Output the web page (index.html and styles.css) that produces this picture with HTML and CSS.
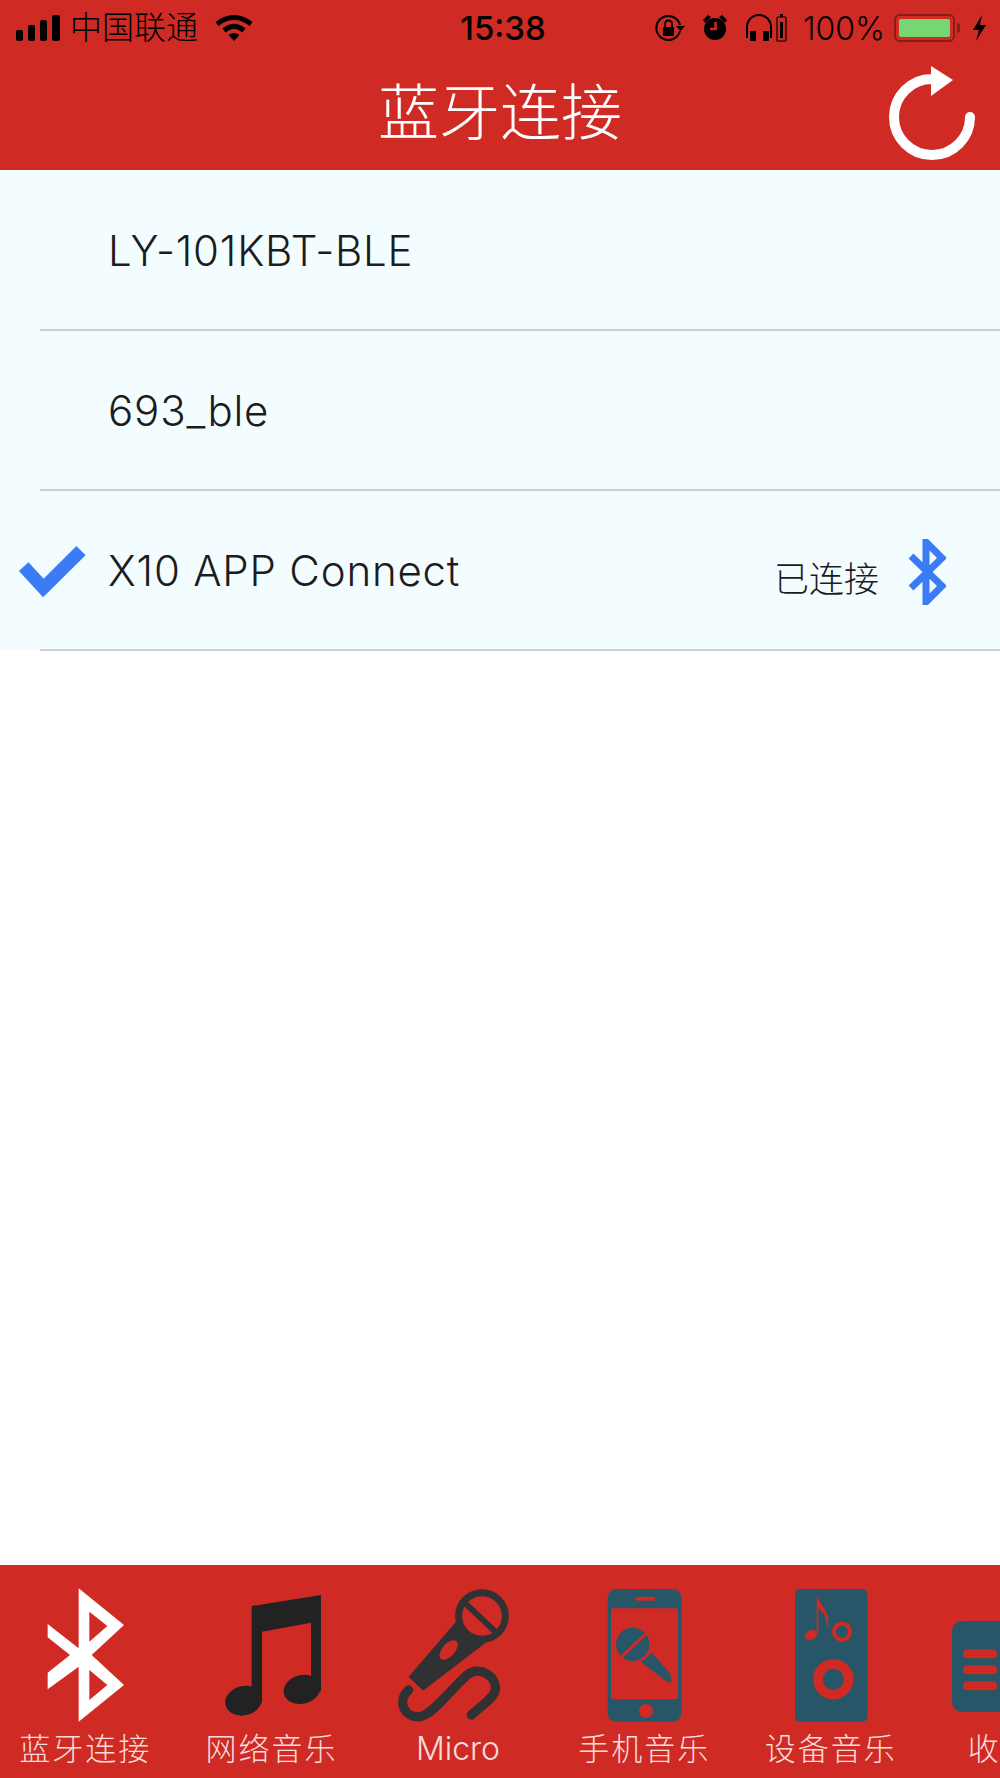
FILE: index.html
```html
<!DOCTYPE html>
<html lang="zh-CN">
<head>
    <meta charset="UTF-8">
    <meta name="viewport" content="width=device-width, initial-scale=1.0">
    <title>蓝牙连接</title>
    <link rel="stylesheet" href="styles.css">
</head>
<body>

    <div class="page">

        <div class="header">
            <div class="status-bar">
                <div class="status-left">
                    <svg class="signal" width="44" height="26" viewBox="0 0 44 26">
                        <rect x="0" y="15" width="7" height="11" rx="2"/>
                        <rect x="12" y="10" width="7" height="16" rx="2"/>
                        <rect x="24" y="5" width="7" height="21" rx="2"/>
                        <rect x="36" y="0" width="8" height="26" rx="2"/>
                    </svg>
                    <span class="carrier">中国联通</span>
                    <svg class="wifi" width="38" height="26" viewBox="0 0 38 26">
                        <path class="wifi-arc" d="M2 9 Q19 -4 36 9"/>
                        <path class="wifi-arc" d="M9 15.5 Q19 7 29 15.5"/>
                        <path d="M13.5 20 Q19 16 24.5 20 L19 26 Z"/>
                    </svg>
                </div>
                <div class="time">15:38</div>
                <div class="status-right">
                    <svg width="30" height="28" viewBox="0 0 30 28">
                        <path class="line-icon" d="M25 17 A12 12 0 1 1 25 11"/>
                        <path d="M21 12 H30 L25.5 17 Z"/>
                        <rect x="8" y="13" width="11" height="9" rx="1"/>
                        <path class="line-icon" d="M10 13 V10 A3.5 3.5 0 0 1 17 10 V13"/>
                    </svg>
                    <svg width="26" height="28" viewBox="0 0 26 28">
                        <circle cx="13" cy="15" r="11"/>
                        <path d="M1 6 L6 1 L9 3 L3 9 Z M25 6 L20 1 L17 3 L23 9 Z"/>
                        <path class="alarm-hand" d="M13.5 8 V15 H8"/>
                    </svg>
                    <div class="audio-group">
                        <svg width="28" height="28" viewBox="0 0 28 28">
                            <path class="line-icon" d="M2 24 V13 A12 12 0 0 1 26 13 V24"/>
                            <rect x="5" y="17" width="6" height="10" rx="1"/>
                            <rect x="18" y="17" width="6" height="10" rx="1"/>
                        </svg>
                        <svg width="11" height="28" viewBox="0 0 11 28">
                            <rect x="4" y="0" width="3" height="3"/>
                            <rect class="mini-battery" x="1" y="3" width="9" height="24" rx="1"/>
                            <rect x="4" y="8" width="3" height="16"/>
                        </svg>
                    </div>
                    <span class="percent">100%</span>
                    <div class="battery">
                        <div class="battery-body"><div class="battery-fill"></div></div>
                        <div class="battery-nub"></div>
                    </div>
                    <svg class="bolt" width="15" height="26" viewBox="0 0 15 26">
                        <path d="M10 0 L1 15 H7 L4 26 L14 10 H8 Z"/>
                    </svg>
                </div>
            </div>

            <div class="nav">
                <div></div>
                <div class="title">蓝牙连接</div>
                <svg class="refresh" width="90" height="104" viewBox="0 0 90 104">
                    <path class="refresh-arc" d="M85 56 A38 38 0 1 1 47 18"/>
                    <path class="refresh-head" d="M46 5 L68 19 L46 35 Z"/>
                </svg>
            </div>
        </div>

        <div class="device-list">
            <div class="device">
                <div class="device-name">LY-101KBT-BLE</div>
            </div>
            <div class="device">
                <div class="device-name">693_ble</div>
            </div>
            <div class="device">
                <svg class="check" width="68" height="56" viewBox="0 0 68 56">
                    <path d="M5.7 23.7 L25.3 45 L63 7.7"/>
                </svg>
                <div class="device-name">X10 APP Connect</div>
                <div class="device-state">已连接</div>
                <svg class="device-bt" width="38" height="66" viewBox="0 0 38 66">
                    <path d="M3 17 L34 47 L18 63 V3 L34 19 L3 49"/>
                </svg>
            </div>
        </div>

        <div class="spacer"></div>

        <div class="tabbar">
            <div class="tab">
                <svg class="tab-icon" viewBox="0 0 558 402">
                    <path class="icon-white" fill-rule="evenodd" d="M260 1 L396 111 L299 201 L396 291 L260 401 V236 L167 304 V254 L234 201 L167 148 V108 L260 181 Z M292 71 V161 L346 114 Z M292 246 V336 L346 291 Z"/>
                </svg>
                <div class="tab-label">蓝牙连接</div>
            </div>
            <div class="tab">
                <svg class="tab-icon" viewBox="0 0 558 402">
                    <g class="icon-black">
                        <path d="M218 54 L426 21 V310 H396 V104 L249 131 V345 H218 Z"/>
                        <ellipse cx="369" cy="304" rx="56" ry="43" transform="rotate(-15 369 304)"/>
                        <ellipse cx="194" cy="338" rx="56" ry="44" transform="rotate(-15 194 338)"/>
                    </g>
                </svg>
                <div class="tab-label">网络音乐</div>
            </div>
            <div class="tab">
                <svg class="tab-icon" viewBox="0 0 558 402">
                    <path class="icon-mic" d="M286 86 L131 266 L174 308 L366 161 Z"/>
                    <circle class="icon-hole" cx="351" cy="84" r="72"/>
                    <circle class="mic-ring" cx="351" cy="84" r="70"/>
                    <path class="mic-line" d="M301 46 L391 131"/>
                    <ellipse class="icon-hole" cx="251" cy="186" rx="35" ry="19" transform="rotate(-48 251 186)"/>
                    <path class="mic-cord" d="M131 306 C96 336 116 391 166 386 C201 381 256 306 306 261 C346 231 396 266 391 306 C386 331 346 356 319 381"/>
                </svg>
                <div class="tab-label tab-label-latin">Micro</div>
            </div>
            <div class="tab">
                <svg class="tab-icon" viewBox="0 0 558 402">
                    <rect class="icon-teal" x="170" y="3" width="221" height="398" rx="25"/>
                    <rect class="icon-hole" x="180" y="61" width="201" height="273" rx="6"/>
                    <rect class="icon-hole" x="253" y="26" width="60" height="12" rx="6"/>
                    <circle class="icon-hole" cx="285" cy="369" r="21"/>
                    <circle class="icon-teal" cx="245" cy="169" r="50"/>
                    <path class="phone-slash" d="M210 208 L284 138"/>
                    <path class="icon-teal" d="M270 222 L303 194 L358 258 L362 283 L348 281 Z"/>
                </svg>
                <div class="tab-label">手机音乐</div>
            </div>
            <div class="tab">
                <svg class="tab-icon" viewBox="0 0 558 402">
                    <rect class="icon-teal" x="171" y="3" width="217" height="398" rx="15"/>
                    <circle class="speaker-big" cx="286" cy="274" r="46"/>
                    <circle class="speaker-small" cx="312" cy="131" r="24"/>
                    <ellipse class="icon-hole" cx="219" cy="141" rx="19" ry="14" transform="rotate(-25 219 141)"/>
                    <path class="icon-hole" d="M236 26 L240 26 C246 55 285 75 266 126 C270 85 252 70 241 62 V138 H236 Z"/>
                </svg>
                <div class="tab-label">设备音乐</div>
            </div>
            <div class="tab">
                <svg class="tab-icon" viewBox="0 0 558 402">
                    <rect class="icon-teal" x="84" y="99" width="220" height="273" rx="30"/>
                    <rect class="icon-hole" x="117" y="184" width="102" height="27" rx="13"/>
                    <rect class="icon-hole" x="117" y="232" width="102" height="27" rx="13"/>
                    <rect class="icon-hole" x="117" y="280" width="102" height="27" rx="13"/>
                </svg>
                <div class="tab-label">收藏夹</div>
            </div>
        </div>
    </div>

</body>
</html>
```

FILE: styles.css
```css
* {
    box-sizing: border-box;
}

body {
    margin: 0;
    padding: 0;
    background-color: #ffffff;
    font-family: Inter, "Noto Sans CJK SC", sans-serif;
    color: #1c1c1e;
}

.page {
    width: 1000px;
    height: 1778px;
    display: flex;
    flex-direction: column;
    overflow: hidden;
}

/* header */
.header {
    background-color: #cf2a24;
    height: 170px;
}

.status-bar {
    height: 56px;
    padding: 0 13px 0 16px;
    display: grid;
    grid-template-columns: 1fr auto 1fr;
    align-items: center;
    color: #000000;
}

.status-bar svg {
    display: block;
    fill: #000000;
}

.status-left {
    display: flex;
    align-items: center;
}

.carrier {
    font-size: 32px;
    font-weight: 300;
    line-height: 36px;
    margin-left: 10px;
}

.status-left .wifi {
    margin-left: 17px;
}

.wifi-arc {
    fill: none !important;
    stroke: #000000;
    stroke-width: 5;
}

.time {
    font-size: 33px;
    font-weight: 500;
    padding-left: 3px;
}

.status-right {
    display: flex;
    align-items: center;
    justify-content: flex-end;
    gap: 17px;
}

.status-bar .line-icon {
    fill: none;
    stroke: #000000;
    stroke-width: 2;
}

.status-bar .alarm-hand {
    fill: none;
    stroke: #cf2a24;
    stroke-width: 2.5;
}

.audio-group {
    display: flex;
    align-items: center;
    gap: 3px;
}

.status-bar .mini-battery {
    fill: none;
    stroke: #000000;
    stroke-width: 1.2;
}

.percent {
    font-size: 32px;
    font-weight: 300;
    margin-left: -1px;
}

.battery {
    display: flex;
    align-items: center;
    gap: 2px;
    margin-left: -8px;
}

.battery-body {
    width: 61px;
    height: 28px;
    padding: 3px;
    border: 2px solid #8a1c18;
    border-radius: 6px;
    background-color: #cf2a24;
}

.battery-fill {
    height: 100%;
    background-color: #76d672;
    border-radius: 2px;
}

.battery-nub {
    width: 3px;
    height: 10px;
    background-color: #8a1c18;
    border-radius: 0 3px 3px 0;
}

.status-bar .bolt {
    margin-left: -5px;
}

.nav {
    height: 114px;
    display: grid;
    grid-template-columns: 1fr auto 1fr;
    align-items: center;
    color: #ffffff;
}

.title {
    font-size: 61px;
    font-weight: 300;
    line-height: 70px;
}

.refresh {
    justify-self: end;
    display: block;
    margin-right: 25px;
}

.refresh-arc {
    fill: none;
    stroke: #ffffff;
    stroke-width: 10;
    stroke-linecap: round;
}

.refresh-head {
    fill: #ffffff;
}

/* device list */
.device-list {
    background-color: #f3fcff;
}

.device {
    position: relative;
    height: 160px;
    padding-left: 108px;
    display: flex;
    align-items: center;
}

.device::after {
    content: "";
    position: absolute;
    left: 40px;
    right: 0;
    bottom: -1px;
    height: 2px;
    background-color: #cdd1d4;
}

.device-name {
    flex: 1;
    font-size: 42px;
    font-weight: 300;
    letter-spacing: 0.8px;
}

.check {
    position: absolute;
    left: 18px;
    top: 53px;
}

.check path {
    fill: none;
    stroke: #3b7cf6;
    stroke-width: 13;
}

.device-state {
    font-size: 35px;
    font-weight: 300;
    margin-top: 12px;
    margin-right: 29px;
}

.device-bt {
    margin-top: 4px;
    margin-right: 54px;
}

.device-bt path {
    fill: none;
    stroke: #3b7cf6;
    stroke-width: 7;
}

.spacer {
    flex: 1;
}

/* tab bar */
.tabbar {
    height: 213px;
    padding-top: 23px;
    background-color: #cf2a24;
    display: flex;
    margin-left: -8px;
    width: 1200px;
}

.tab {
    flex: 0 0 186.4px;
    display: flex;
    flex-direction: column;
    align-items: center;
}

.tab-icon {
    display: block;
    width: 186px;
    height: 134px;
}

.tab-label {
    margin-top: 9px;
    font-size: 31px;
    font-weight: 300;
    letter-spacing: 2px;
    line-height: 36px;
    color: #f8dcda;
    white-space: nowrap;
}

.tab-label-latin {
    font-size: 32px;
    letter-spacing: 0;
}

.icon-white {
    fill: #ffffff;
}

.icon-black {
    fill: #222222;
}

.icon-mic {
    fill: #2f3133;
}

.icon-teal {
    fill: #275669;
}

.icon-hole {
    fill: #cf2a24;
}

.mic-ring {
    fill: none;
    stroke: #2f3133;
    stroke-width: 21;
}

.mic-line {
    fill: none;
    stroke: #2f3133;
    stroke-width: 18;
}

.mic-cord {
    fill: none;
    stroke: #2f3133;
    stroke-width: 28;
    stroke-linecap: round;
}

.phone-slash {
    fill: none;
    stroke: #cf2a24;
    stroke-width: 9;
}

.speaker-big {
    fill: none;
    stroke: #cf2a24;
    stroke-width: 29;
}

.speaker-small {
    fill: none;
    stroke: #cf2a24;
    stroke-width: 12;
}
```
